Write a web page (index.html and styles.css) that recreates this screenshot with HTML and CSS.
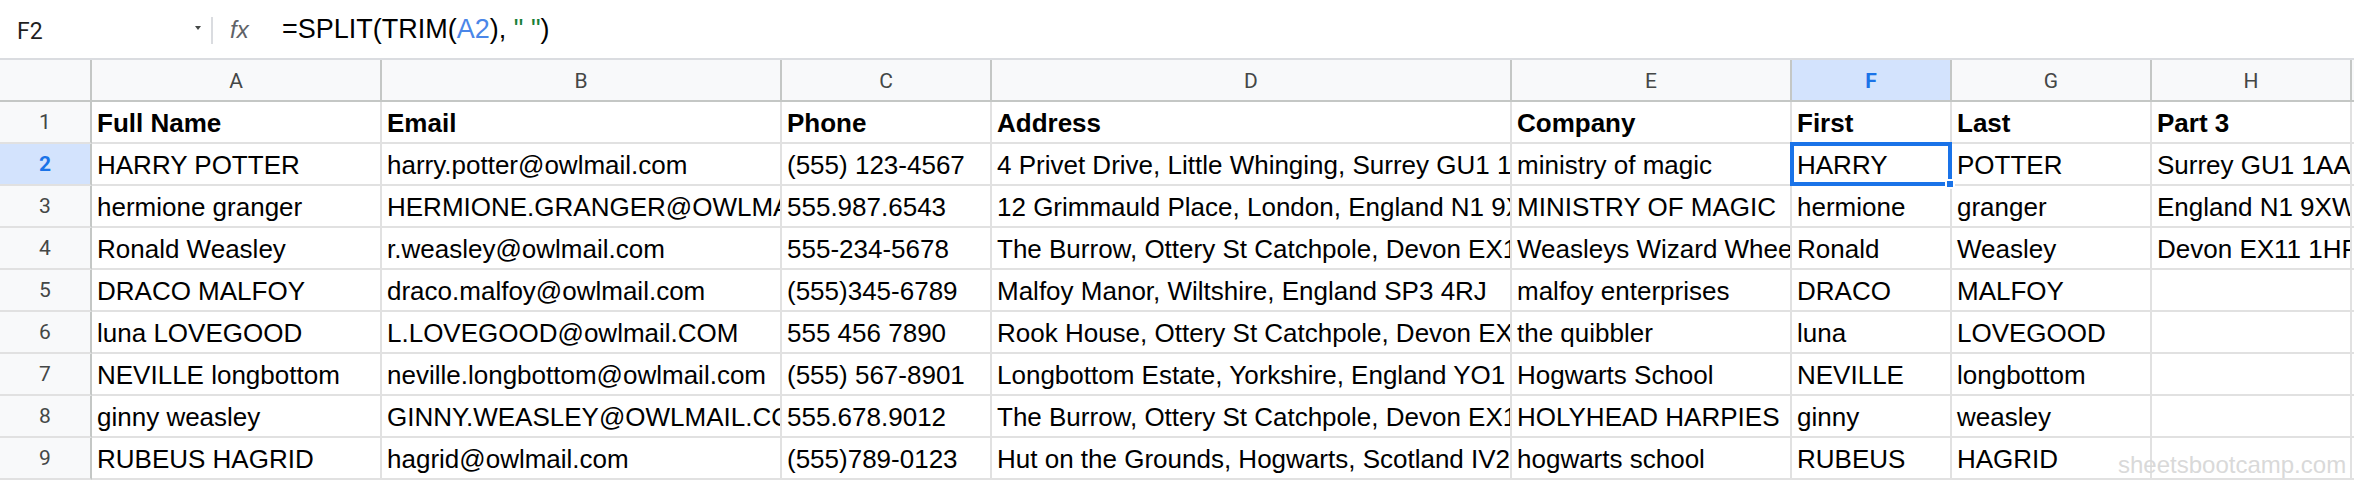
FILE: index.html
```html
<!DOCTYPE html>
<html>
<head>
<meta charset="utf-8">
<link rel="stylesheet" href="styles.css">
</head>
<body>
<div class="page">
  <div class="fbar">
    <div class="name">F2</div>
    <div class="arrow"></div>
    <div class="sep"></div>
    <div class="fx">fx</div>
    <div class="formula">=SPLIT(TRIM(<span class="ref">A2</span>), <span class="str">" "</span>)</div>
  </div>
  <div class="sheet">
    <div class="hdr corner"></div><div class="hdr">A</div><div class="hdr">B</div><div class="hdr">C</div><div class="hdr">D</div><div class="hdr">E</div><div class="hdr selh">F</div><div class="hdr">G</div><div class="hdr">H</div><div class="hdr edge"></div>

    <div class="rh">1</div><div class="c b">Full Name</div><div class="c b">Email</div><div class="c b">Phone</div><div class="c b">Address</div><div class="c b">Company</div><div class="c b">First</div><div class="c b">Last</div><div class="c b">Part 3</div><div class="c edge"></div>

    <div class="rh selh">2</div><div class="c">HARRY POTTER</div><div class="c">harry.potter@owlmail.com</div><div class="c">(555) 123-4567</div><div class="c">4 Privet Drive, Little Whinging, Surrey GU1 1AA</div><div class="c">ministry of magic</div><div class="c active">HARRY<span class="handle"></span></div><div class="c">POTTER</div><div class="c">Surrey GU1 1AA</div><div class="c edge"></div>

    <div class="rh">3</div><div class="c">hermione granger</div><div class="c">HERMIONE.GRANGER@OWLMAIL.COM</div><div class="c">555.987.6543</div><div class="c">12 Grimmauld Place, London, England N1 9XW</div><div class="c">MINISTRY OF MAGIC</div><div class="c">hermione</div><div class="c">granger</div><div class="c">England N1 9XW</div><div class="c edge"></div>

    <div class="rh">4</div><div class="c">Ronald Weasley</div><div class="c">r.weasley@owlmail.com</div><div class="c">555-234-5678</div><div class="c">The Burrow, Ottery St Catchpole, Devon EX11 1HP</div><div class="c">Weasleys Wizard Wheezes</div><div class="c">Ronald</div><div class="c">Weasley</div><div class="c">Devon EX11 1HP</div><div class="c edge"></div>

    <div class="rh">5</div><div class="c">DRACO MALFOY</div><div class="c">draco.malfoy@owlmail.com</div><div class="c">(555)345-6789</div><div class="c">Malfoy Manor, Wiltshire, England SP3 4RJ</div><div class="c">malfoy enterprises</div><div class="c">DRACO</div><div class="c">MALFOY</div><div class="c"></div><div class="c edge"></div>

    <div class="rh">6</div><div class="c">luna LOVEGOOD</div><div class="c">L.LOVEGOOD@owlmail.COM</div><div class="c">555 456 7890</div><div class="c">Rook House, Ottery St Catchpole, Devon EX11 1HP</div><div class="c">the quibbler</div><div class="c">luna</div><div class="c">LOVEGOOD</div><div class="c"></div><div class="c edge"></div>

    <div class="rh">7</div><div class="c">NEVILLE longbottom</div><div class="c">neville.longbottom@owlmail.com</div><div class="c">(555) 567-8901</div><div class="c">Longbottom Estate, Yorkshire, England YO1 7HH</div><div class="c">Hogwarts School</div><div class="c">NEVILLE</div><div class="c">longbottom</div><div class="c"></div><div class="c edge"></div>

    <div class="rh">8</div><div class="c">ginny weasley</div><div class="c">GINNY.WEASLEY@OWLMAIL.COM</div><div class="c">555.678.9012</div><div class="c">The Burrow, Ottery St Catchpole, Devon EX11 1HP</div><div class="c">HOLYHEAD HARPIES</div><div class="c">ginny</div><div class="c">weasley</div><div class="c"></div><div class="c edge"></div>

    <div class="rh">9</div><div class="c">RUBEUS HAGRID</div><div class="c">hagrid@owlmail.com</div><div class="c">(555)789-0123</div><div class="c">Hut on the Grounds, Hogwarts, Scotland IV2 3XY</div><div class="c">hogwarts school</div><div class="c">RUBEUS</div><div class="c">HAGRID</div><div class="c"></div><div class="c edge"></div>
  </div>
  <div class="watermark">sheetsbootcamp.com</div>
</div>
</body>
</html>
```

FILE: styles.css
```css
html, body {
  margin: 0;
  padding: 0;
  background: #ffffff;
}

.page {
  position: relative;
  width: 2354px;
  height: 484px;
  overflow: hidden;
  font-family: "Liberation Sans", Arial, sans-serif;
  color: #000;
}

/* formula bar */
.fbar {
  height: 58px;
  border-bottom: 2px solid #dadce0;
  display: flex;
  align-items: center;
  box-sizing: content-box;
}

.name {
  width: 178px;
  padding-left: 17px;
  font-family: Roboto, "Liberation Sans", sans-serif;
  font-size: 23px;
  color: #1f1f1f;
  padding-top: 4px;
}

.arrow {
  width: 0;
  height: 0;
  border-left: 3.5px solid transparent;
  border-right: 3.5px solid transparent;
  border-top: 4px solid #444746;
  margin-top: -2px;
}

.sep {
  width: 2px;
  height: 27px;
  background: #dadce0;
  margin-left: 10px;
  margin-top: 2px;
}

.fx {
  margin-left: 17px;
  width: 20px;
  font-family: "Liberation Sans", Arial, sans-serif;
  font-style: italic;
  font-size: 24px;
  color: #5f6368;
  padding-top: 2px;
}

.formula {
  margin-left: 32px;
  font-size: 27px;
  color: #000;
  white-space: nowrap;
}

.ref {
  color: #4a86e8;
}

.str {
  color: #188038;
}

/* grid */
.sheet {
  display: grid;
  grid-template-columns: 92px 290px 400px 210px 520px 280px 160px 200px 200px 2px;
  grid-auto-rows: 42px;
}

.hdr, .rh, .c {
  box-sizing: border-box;
  border-right: 2px solid #e1e1e1;
  border-bottom: 2px solid #e1e1e1;
  overflow: hidden;
  white-space: nowrap;
}

.hdr {
  background: #f8f9fa;
  border-right-color: #c4c7c5;
  border-bottom-color: #c4c7c5;
  display: flex;
  align-items: center;
  justify-content: center;
  font-family: Roboto, "Liberation Sans", sans-serif;
  font-size: 21px;
  color: #444746;
  padding-top: 2px;
}

.rh {
  background: #f8f9fa;
  border-right-color: #c4c7c5;
  display: flex;
  align-items: center;
  justify-content: center;
  font-family: Roboto, "Liberation Sans", sans-serif;
  font-size: 21px;
  color: #444746;
}

.selh {
  background: #d3e3fd;
  color: #1a73e8;
  font-weight: bold;
}

.c {
  display: flex;
  align-items: flex-end;
  padding: 0 5px 6px 5px;
  font-size: 26px;
  line-height: 26px;
  color: #000;
}

.b {
  font-weight: bold;
}

.edge {
  border-right: none;
  padding: 0;
}

.hdr.edge {
  border-right: none;
}

.active {
  position: relative;
  overflow: visible;
}

.active::after {
  content: "";
  position: absolute;
  left: -2px;
  top: -2px;
  right: -2px;
  bottom: -2px;
  border: 4px solid #1a73e8;
  pointer-events: none;
}

.handle {
  position: absolute;
  right: -5px;
  bottom: -5px;
  width: 6px;
  height: 6px;
  background: #1a73e8;
  border: 2px solid #ffffff;
  z-index: 2;
}

.watermark {
  position: absolute;
  left: 2118px;
  top: 453px;
  font-size: 24px;
  line-height: 24px;
  color: #d9d9d9;
  white-space: nowrap;
}
```
